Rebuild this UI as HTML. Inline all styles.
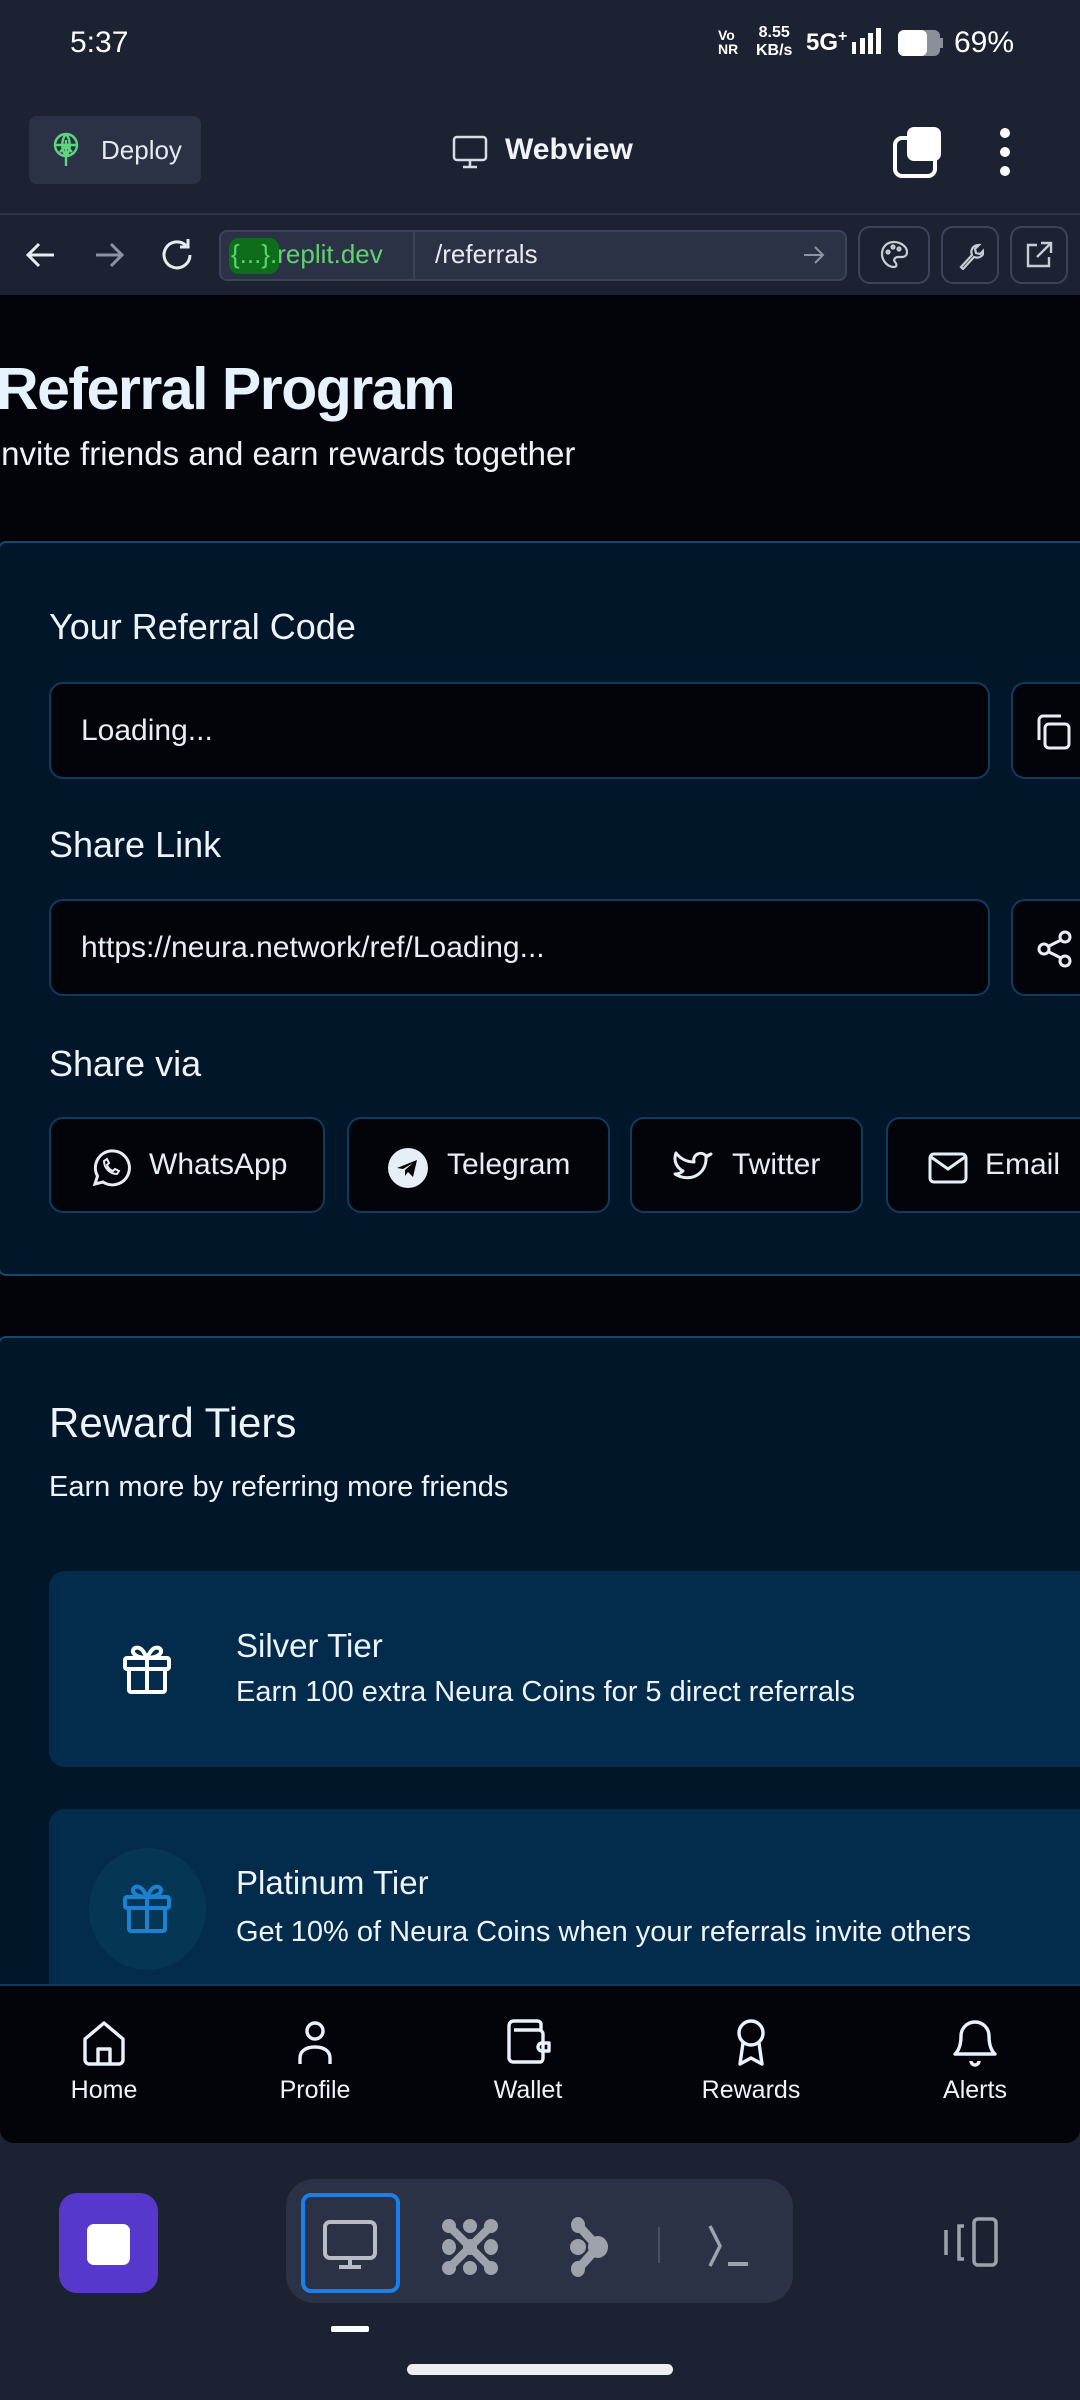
<!DOCTYPE html>
<html><head><meta charset="utf-8"><style>
*{box-sizing:border-box;margin:0;padding:0}
body{width:1080px;height:2400px;overflow:hidden;background:#1c2232;font-family:"Liberation Sans",sans-serif;color:#f0f4fa;position:relative}
.abs{position:absolute}
.t{white-space:nowrap}
svg{display:block}
.card{position:absolute;left:-2px;width:1090px;background:#011629;border:2px solid #17476b;border-radius:8px}
.inp{position:absolute;left:49px;width:941px;height:97px;background:#020409;border:2px solid #0f3c5e;border-radius:14px;font-size:30px;padding-left:30px;line-height:93px;color:#e8eef6}
.sq{position:absolute;left:1011px;width:100px;height:97px;background:#020409;border:2px solid #0f3c5e;border-radius:14px}
.btn{position:absolute;top:1117px;height:96px;background:#020409;border:2px solid #0f3c5e;border-radius:14px;font-size:30px;color:#e8eef6}
.btn svg{position:absolute;top:28px}
.btn span{position:absolute;top:29px}
.tier{position:absolute;left:49px;width:1060px;background:#032b4b;border-radius:16px}
.nav{position:absolute;top:2042px;width:120px;text-align:center;font-size:25px;color:#eef3fa}
</style></head><body>
<!-- status bar -->
<div class="abs t" style="left:70px;top:26px;font-size:30px;color:#fff">5:37</div>
<div class="abs t" style="left:718px;top:28px;font-size:14px;line-height:14px;font-weight:bold;color:#fff">Vo<br>NR</div>
<div class="abs t" style="left:756px;top:24px;font-size:16px;line-height:18px;font-weight:bold;color:#fff;text-align:center">8.55<br>KB/s</div>
<div class="abs t" style="left:806px;top:28px;font-size:24px;font-weight:bold;color:#fff">5G<sup style="font-size:16px">+</sup></div>
<svg class="abs" style="left:852px;top:28px" width="32" height="28"><rect x="0" y="14" width="4" height="12" fill="#fff"/><rect x="8" y="10" width="5" height="16" fill="#fff"/><rect x="16" y="5" width="5" height="21" fill="#fff"/><rect x="24" y="0" width="5" height="26" fill="#fff"/></svg>
<svg class="abs" style="left:898px;top:30px" width="46" height="26"><rect x="0" y="0" width="42" height="26" rx="6" fill="#8a8f9a"/><rect x="0" y="0" width="29" height="26" rx="6" fill="#fff"/><rect x="42" y="8" width="3" height="10" fill="#8a8f9a"/></svg>
<div class="abs t" style="left:954px;top:26px;font-size:30px;color:#fff">69%</div>

<!-- top bar -->
<div class="abs" style="left:29px;top:116px;width:172px;height:68px;background:#2b3245;border-radius:8px"></div>
<svg class="abs" style="left:52px;top:132px" width="28" height="36" viewBox="0 0 28 36" fill="none" stroke="#5dd67e" stroke-width="2.4"><circle cx="14" cy="13" r="11"/><path d="M3 13h22M14 2c-5 6-5 16 0 22M14 2c5 6 5 16 0 22M14 8v26M8 20l6-6 6 6"/></svg>
<div class="abs t" style="left:101px;top:135px;font-size:26px;color:#e6e9ef">Deploy</div>
<svg class="abs" style="left:452px;top:134px" width="36" height="36" viewBox="0 0 36 36" fill="none" stroke="#d8dce4" stroke-width="2.5"><rect x="2" y="3" width="32" height="23" rx="3"/><path d="M18 26v6M11 33h14"/></svg>
<div class="abs t" style="left:505px;top:133px;font-size:30px;font-weight:bold;color:#f1f3f7">Webview</div>
<svg class="abs" style="left:892px;top:126px" width="52" height="52" viewBox="0 0 52 52"><rect x="3" y="12" width="40" height="38" rx="7" fill="none" stroke="#fff" stroke-width="4"/><rect x="15" y="1" width="34" height="34" rx="7" fill="#fff"/></svg>
<svg class="abs" style="left:996px;top:126px" width="18" height="52"><circle cx="9" cy="7" r="5" fill="#fff"/><circle cx="9" cy="26" r="5" fill="#fff"/><circle cx="9" cy="45" r="5" fill="#fff"/></svg>
<div class="abs" style="left:0;top:213px;width:1080px;height:2px;background:#2c3345"></div>

<!-- url row -->
<svg class="abs" style="left:24px;top:240px" width="34" height="30" viewBox="0 0 34 30" fill="none" stroke="#e8ebf0" stroke-width="3"><path d="M30 15H5M15 4L4 15l11 11"/></svg>
<svg class="abs" style="left:92px;top:240px" width="34" height="30" viewBox="0 0 34 30" fill="none" stroke="#8d93a0" stroke-width="3"><path d="M4 15h25M19 4l11 11-11 11"/></svg>
<svg class="abs" style="left:158px;top:236px" width="38" height="38" viewBox="0 0 38 38" fill="none" stroke="#e8ebf0" stroke-width="3"><path d="M32 19A13 13 0 1 1 28 9.5"/><path d="M30 3v8h-8"/></svg>
<div class="abs" style="left:219px;top:230px;width:628px;height:51px;background:#2b3245;border:2px solid #3d4459;border-radius:8px"></div>
<div class="abs" style="left:229px;top:238px;width:50px;height:36px;background:#0e6d1b;border-radius:10px"></div>
<div class="abs t" style="left:231px;top:239px;font-size:26px;color:#5fd36e">{...}.replit.dev</div>
<div class="abs" style="left:413px;top:232px;width:2px;height:47px;background:#3d4459"></div>
<div class="abs t" style="left:435px;top:239px;font-size:26px;color:#e6e9ef">/referrals</div>
<svg class="abs" style="left:802px;top:244px" width="24" height="22" viewBox="0 0 24 22" fill="none" stroke="#8d93a0" stroke-width="2"><path d="M2 11h19M13 3l8 8-8 8"/></svg>
<div class="abs" style="left:858px;top:226px;width:72px;height:58px;border:2px solid #3d4459;border-radius:12px"></div>
<svg class="abs" style="left:880px;top:240px" width="28" height="30" viewBox="0 0 28 30" fill="none" stroke="#c8ccd4" stroke-width="2.2"><path d="M14 2C6 2 2 8 2 14s5 13 12 13c3 0 3-3 1-5s0-5 3-5h4c3 0 5-2 5-5C27 7 21 2 14 2z"/><circle cx="8" cy="12" r="1.5"/><circle cx="13" cy="7" r="1.5"/><circle cx="19" cy="9" r="1.5"/></svg>
<div class="abs" style="left:941px;top:226px;width:58px;height:58px;border:2px solid #3d4459;border-radius:12px"></div>
<svg class="abs" style="left:956px;top:240px" width="28" height="30" viewBox="0 0 28 30" fill="none" stroke="#c8ccd4" stroke-width="2.2"><path d="M5 27l11-12c-2-5 1-10 7-10l-4 4 1 4 4 1 4-4c0 6-5 9-10 7L7 29z"/></svg>
<div class="abs" style="left:1010px;top:226px;width:58px;height:58px;border:2px solid #3d4459;border-radius:12px"></div>
<svg class="abs" style="left:1024px;top:240px" width="30" height="30" viewBox="0 0 30 30" fill="none" stroke="#c8ccd4" stroke-width="2.4"><path d="M13 5H4v21h21v-9M17 3h10v10M27 3L13 17"/></svg>

<!-- webview content -->
<div class="abs" style="left:0;top:295px;width:1080px;height:1848px;background:#020409;border-radius:0 0 14px 14px;overflow:hidden">
 <div class="abs t" style="left:-4px;top:60px;font-size:59px;font-weight:bold;color:#e6f2fe;letter-spacing:-1.5px">Referral Program</div>
 <div class="abs t" style="left:-8px;top:140px;font-size:33px;color:#eef3fa">Invite friends and earn rewards together</div>
 <div class="card" style="top:246px;height:735px"></div>
 <div class="abs t" style="left:49px;top:311px;font-size:36px;color:#eef3fa">Your Referral Code</div>
 <div class="inp" style="top:387px">Loading...</div>
 <div class="sq" style="top:387px"><svg class="abs" style="left:20px;top:28px" width="40" height="40" viewBox="0 0 40 40" fill="none" stroke="#e8eef6" stroke-width="3"><rect x="12" y="12" width="24" height="24" rx="4"/><path d="M6 28V8c0-2 2-4 4-4h18"/></svg></div>
 <div class="abs t" style="left:49px;top:529px;font-size:36px;color:#eef3fa">Share Link</div>
 <div class="inp" style="top:604px">https://neura.network/ref/Loading...</div>
 <div class="sq" style="top:604px"><svg class="abs" style="left:22px;top:28px" width="40" height="40" viewBox="0 0 40 40" fill="none" stroke="#e8eef6" stroke-width="3"><circle cx="30" cy="8" r="5"/><circle cx="9" cy="20" r="5"/><circle cx="30" cy="32" r="5"/><path d="M14 17l12-6M14 23l12 6"/></svg></div>
 <div class="abs t" style="left:49px;top:748px;font-size:36px;color:#eef3fa">Share via</div>
 <div class="btn" style="left:49px;top:822px;width:276px"><svg style="left:38px" width="42" height="42" viewBox="0 0 42 42" fill="none" stroke="#e8eef6" stroke-width="3"><path d="M6 37l2.5-8A17 17 0 1 1 14 35z"/><path d="M15 14c0 7 6 13 13 13l2-3-4-2-2 2c-3-1-5-3-6-6l2-2-2-4z" stroke-width="2"/></svg><span style="left:98px">WhatsApp</span></div>
 <div class="btn" style="left:347px;top:822px;width:263px"><svg style="left:38px" width="42" height="42" viewBox="0 0 42 42"><circle cx="21" cy="21" r="20" fill="#e8eef6"/><path d="M10 21l20-8-4 17-5-5-3 4v-6l8-7-10 6z" fill="#020409"/></svg><span style="left:98px">Telegram</span></div>
 <div class="btn" style="left:630px;top:822px;width:233px"><svg style="left:40px" width="42" height="42" viewBox="0 0 42 42" fill="none" stroke="#e8eef6" stroke-width="3" stroke-linejoin="round"><path d="M39 7c-2 1-4 2-5 2-5-6-14-1-12 6C14 15 8 11 4 6c-3 8 1 15 7 18-2 2-5 3-8 3 14 9 32 1 31-17 2-1 4-2 5-3z"/></svg><span style="left:100px">Twitter</span></div>
 <div class="btn" style="left:886px;top:822px;width:230px"><svg style="left:40px" width="40" height="42" viewBox="0 0 40 42" fill="none" stroke="#e8eef6" stroke-width="3"><rect x="2" y="7" width="36" height="28" rx="4"/><path d="M3 10l17 12 17-12"/></svg><span style="left:97px">Email</span></div>
 <div class="card" style="top:1041px;height:900px"></div>
 <div class="abs t" style="left:49px;top:1104px;font-size:42px;color:#eef3fa">Reward Tiers</div>
 <div class="abs t" style="left:49px;top:1176px;font-size:29px;color:#eef3fa">Earn more by referring more friends</div>
 <div class="tier" style="top:1276px;height:196px"></div>
 <svg class="abs" style="left:122px;top:1348px" width="50" height="52" viewBox="0 0 50 52" fill="none" stroke="#fff" stroke-width="4" stroke-linejoin="round"><rect x="3" y="15" width="44" height="11" rx="2"/><rect x="7" y="26" width="36" height="23" rx="2"/><path d="M25 15v34M25 15c-3-6-6-12-12-10-5 3-1 10 12 10zM25 15c3-6 6-12 12-10 5 3 1 10-12 10z"/></svg>
 <div class="abs t" style="left:236px;top:1332px;font-size:33px;color:#eef3fa">Silver Tier</div>
 <div class="abs t" style="left:236px;top:1381px;font-size:29px;color:#eef3fa">Earn 100 extra Neura Coins for 5 direct referrals</div>
 <div class="tier" style="top:1514px;height:300px"></div>
 <div class="abs" style="left:89px;top:1553px;width:117px;height:122px;border-radius:50%;background:#053656"></div>
 <svg class="abs" style="left:122px;top:1587px" width="50" height="52" viewBox="0 0 50 52" fill="none" stroke="#1a82d0" stroke-width="4" stroke-linejoin="round"><rect x="3" y="15" width="44" height="11" rx="2"/><rect x="7" y="26" width="36" height="23" rx="2"/><path d="M25 15v34M25 15c-3-6-6-12-12-10-5 3-1 10 12 10zM25 15c3-6 6-12 12-10 5 3 1 10-12 10z"/></svg>
 <div class="abs t" style="left:236px;top:1569px;font-size:33px;color:#eef3fa">Platinum Tier</div>
 <div class="abs t" style="left:236px;top:1621px;font-size:29px;color:#eef3fa">Get 10% of Neura Coins when your referrals invite others</div>
 <!-- bottom nav -->
 <div class="abs" style="left:0;top:1689px;width:1080px;height:159px;background:#020409;border-top:2px solid #0f3c5e"></div>
</div>
<svg class="abs" style="left:82px;top:2020px" width="44" height="46" viewBox="0 0 44 46" fill="none" stroke="#eaf2fd" stroke-width="3.4" stroke-linejoin="round"><path d="M3 19L22 3l19 16v21c0 2-2 4-4 4H7c-2 0-4-2-4-4z"/><path d="M16 44V29h12v15"/></svg>
<svg class="abs" style="left:294px;top:2020px" width="42" height="46" viewBox="0 0 42 46" fill="none" stroke="#eaf2fd" stroke-width="3.4"><circle cx="21" cy="11" r="8"/><path d="M6 44v-6c0-7 6-11 15-11s15 4 15 11v6"/></svg>
<svg class="abs" style="left:506px;top:2018px" width="46" height="48" viewBox="0 0 46 48" fill="none" stroke="#eaf2fd" stroke-width="3.4" stroke-linejoin="round"><path d="M35 12V6c0-2-2-3-4-3H8C5 3 3 5 3 8v32c0 2 2 4 4 4h27c2 0 3-2 3-4V16c0-2-2-4-4-4H8"/><path d="M43 25h-7a4 4 0 0 0 0 8h7z"/></svg>
<svg class="abs" style="left:733px;top:2018px" width="36" height="50" viewBox="0 0 36 50" fill="none" stroke="#eaf2fd" stroke-width="3.4" stroke-linejoin="round"><circle cx="18" cy="15" r="12"/><path d="M10 25L7 46l11-6 11 6-3-21"/></svg>
<svg class="abs" style="left:953px;top:2018px" width="44" height="50" viewBox="0 0 44 50" fill="none" stroke="#eaf2fd" stroke-width="3.4" stroke-linejoin="round"><path d="M8 18a14 14 0 0 1 28 0c0 14 6 18 6 18H2s6-4 6-18z"/><path d="M18 43a4 4 0 0 0 8 0"/></svg>
<div class="nav" style="left:44px;top:2076px">Home</div>
<div class="nav" style="left:255px;top:2076px">Profile</div>
<div class="nav" style="left:468px;top:2076px">Wallet</div>
<div class="nav" style="left:691px;top:2076px">Rewards</div>
<div class="nav" style="left:915px;top:2076px">Alerts</div>

<!-- dock -->
<div class="abs" style="left:59px;top:2193px;width:99px;height:100px;background:#5639cc;border-radius:18px"></div>
<div class="abs" style="left:87px;top:2224px;width:43px;height:41px;background:#fff;border-radius:7px"></div>
<div class="abs" style="left:286px;top:2179px;width:507px;height:124px;background:#2b3245;border-radius:28px"></div>
<div class="abs" style="left:301px;top:2193px;width:99px;height:100px;border:4px solid #1a7fea;border-radius:10px;background:#2b3245"></div>
<svg class="abs" style="left:322px;top:2220px" width="56" height="50" viewBox="0 0 56 50" fill="none" stroke="#b8bcc4" stroke-width="4"><rect x="3" y="2" width="50" height="36" rx="5"/><path d="M28 38v8M17 47h22"/></svg>
<svg class="abs" style="left:440px;top:2218px" width="60" height="58" viewBox="0 0 60 58" fill="#9ea3ab"><ellipse cx="9" cy="8" rx="7" ry="7"/><ellipse cx="30" cy="8" rx="7" ry="7"/><ellipse cx="51" cy="8" rx="7" ry="7"/><ellipse cx="9" cy="29" rx="7" ry="8"/><ellipse cx="30" cy="29" rx="7" ry="8"/><ellipse cx="51" cy="29" rx="7" ry="8"/><ellipse cx="9" cy="50" rx="7" ry="7"/><ellipse cx="30" cy="50" rx="7" ry="7"/><ellipse cx="51" cy="50" rx="7" ry="7"/><path d="M9 8L30 29 51 50M51 8L30 29 9 50" stroke="#9ea3ab" stroke-width="8"/></svg>
<svg class="abs" style="left:568px;top:2216px" width="42" height="62" viewBox="0 0 42 62" fill="#9ea3ab"><ellipse cx="10" cy="9" rx="7" ry="8"/><ellipse cx="10" cy="53" rx="7" ry="8"/><ellipse cx="30" cy="31" rx="10" ry="11"/><ellipse cx="10" cy="31" rx="8" ry="8"/><path d="M10 9L30 31 10 53" stroke="#9ea3ab" stroke-width="9" fill="none"/></svg>
<div class="abs" style="left:658px;top:2227px;width:2px;height:36px;background:#4a5164"></div>
<svg class="abs" style="left:706px;top:2223px" width="48" height="46" viewBox="0 0 48 46" fill="none" stroke="#9ea3ab" stroke-width="3.5"><path d="M4 3l10 20-10 20"/><path d="M22 41h20" stroke-width="4"/></svg>
<svg class="abs" style="left:940px;top:2216px" width="62" height="52" viewBox="0 0 62 52" fill="none" stroke="#9ea3ab" stroke-width="3.5"><rect x="34" y="3" width="22" height="46" rx="4"/><path d="M24 10h-5v33h5M6 14v25"/></svg>
<div class="abs" style="left:331px;top:2326px;width:38px;height:6px;background:#fff;border-radius:2px"></div>
<div class="abs" style="left:407px;top:2364px;width:266px;height:11px;background:#eceef0;border-radius:6px"></div>
</body></html>
